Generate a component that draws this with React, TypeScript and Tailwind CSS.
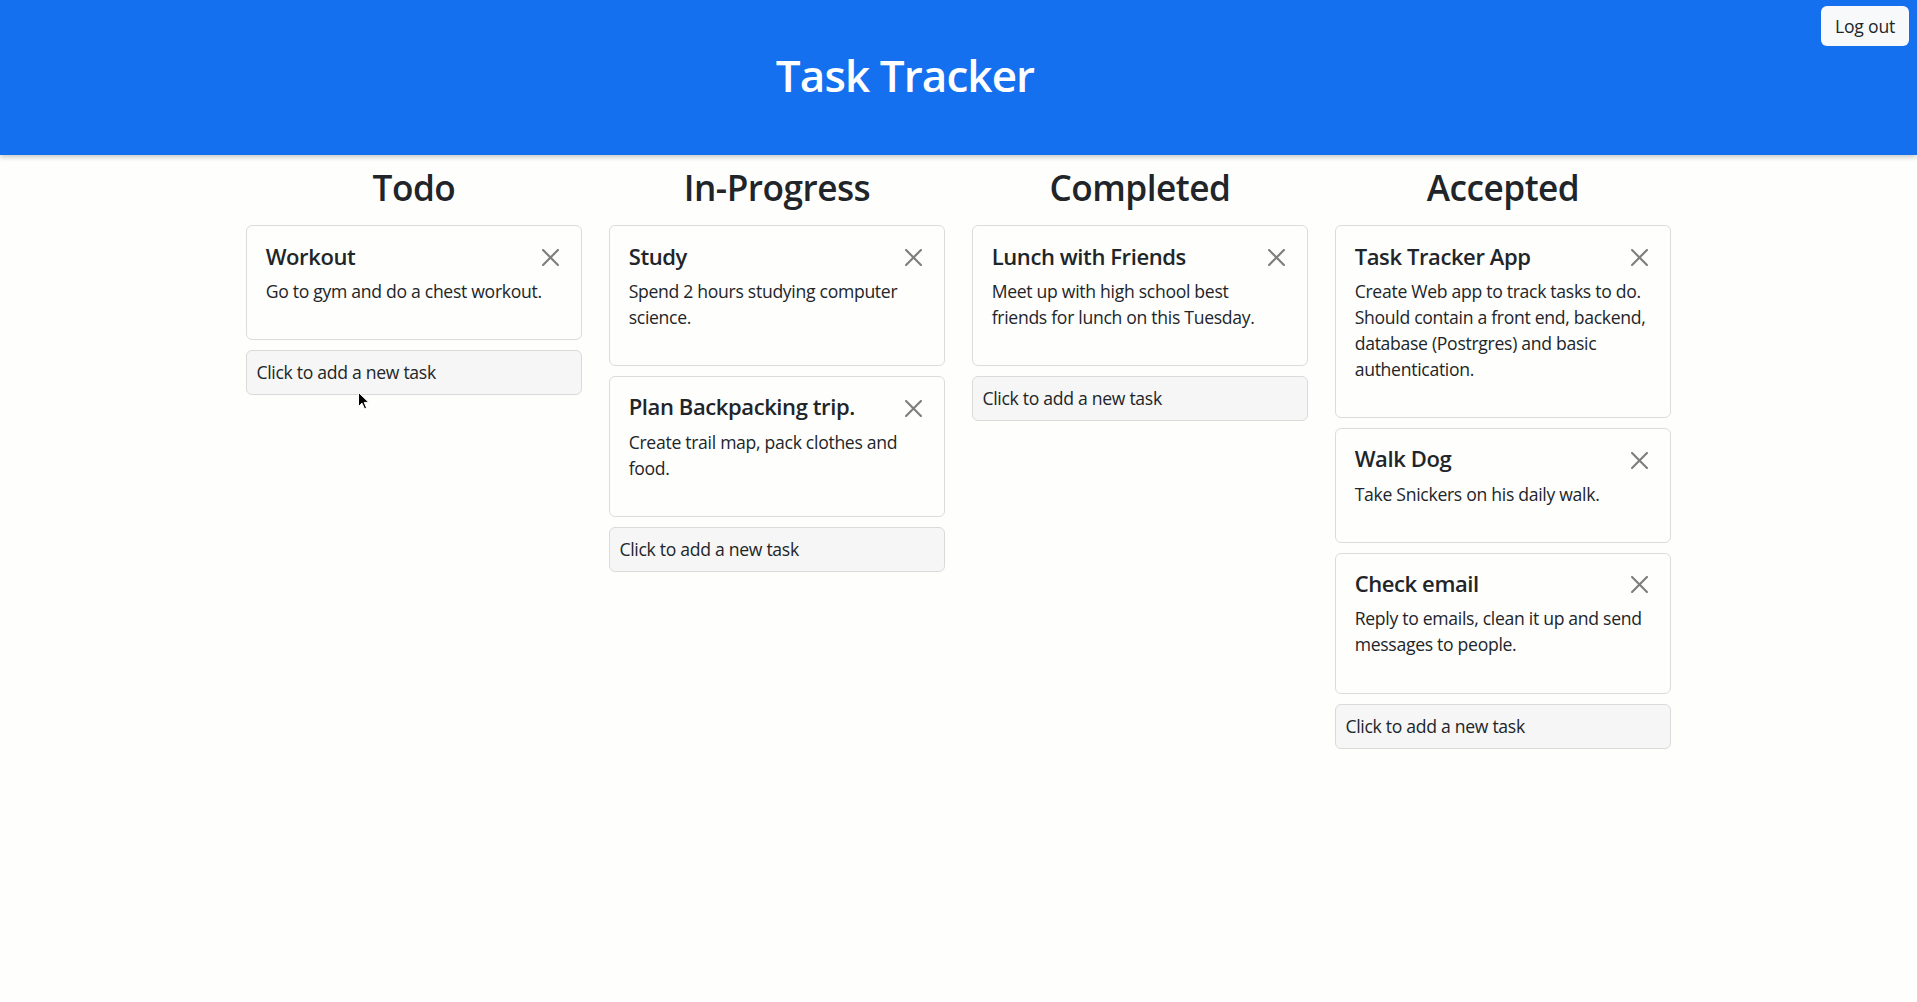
type Task = { title: string; body: string }

type Column = { name: string; tasks: Task[] }

const columns: Column[] = [
  {
    name: 'Todo',
    tasks: [{ title: 'Workout', body: 'Go to gym and do a chest workout.' }],
  },
  {
    name: 'In-Progress',
    tasks: [
      { title: 'Study', body: 'Spend 2 hours studying computer science.' },
      { title: 'Plan Backpacking trip.', body: 'Create trail map, pack clothes and food.' },
    ],
  },
  {
    name: 'Completed',
    tasks: [
      {
        title: 'Lunch with Friends',
        body: 'Meet up with high school best friends for lunch on this Tuesday.',
      },
    ],
  },
  {
    name: 'Accepted',
    tasks: [
      {
        title: 'Task Tracker App',
        body: 'Create Web app to track tasks to do. Should contain a front end, backend, database (Postrgres) and basic authentication.',
      },
      { title: 'Walk Dog', body: 'Take Snickers on his daily walk.' },
      { title: 'Check email', body: 'Reply to emails, clean it up and send messages to people.' },
    ],
  },
]

function CloseIcon() {
  return (
    <svg viewBox="0 0 16 16" className="h-[17px] w-[17px]" fill="#000" opacity={0.5}>
      <path d="M.293.293a1 1 0 0 1 1.414 0L8 6.586 14.293.293a1 1 0 1 1 1.414 1.414L9.414 8l6.293 6.293a1 1 0 0 1-1.414 1.414L8 9.414l-6.293 6.293a1 1 0 0 1-1.414-1.414L6.586 8 .293 1.707a1 1 0 0 1 0-1.414z" />
    </svg>
  )
}

function TaskCard({ task }: { task: Task }) {
  return (
    <div className="mb-[10px] rounded-[6px] border border-[#dcdcdb] bg-[#fefefc] px-[19px] pb-[17.6px] pt-[16.5px]">
      <div className="flex items-center justify-between">
        <h5 className="text-[22px] font-semibold leading-[26.4px] tracking-[-0.4px]">{task.title}</h5>
        <button type="button" className="mr-[3px] mt-[3px] flex items-center justify-center" aria-label="Delete">
          <CloseIcon />
        </button>
      </div>
      {/* narrower wrap box so the lines break where the reference breaks them */}
      <p className="mb-[17.6px] mt-[8.8px] pr-[3px] text-[17.6px] leading-[26px] tracking-[-0.3px]">{task.body}</p>
    </div>
  )
}

function TaskColumn({ column }: { column: Column }) {
  return (
    <div>
      <h2 className="mb-[17px] text-center text-[35.2px] font-semibold leading-[42px] tracking-[-0.5px]">
        {column.name}
      </h2>
      {column.tasks.map((task) => (
        <TaskCard key={task.title} task={task} />
      ))}
      <div className="flex h-[45px] items-center rounded-[6px] border border-[#d9dad9] bg-[#f5f6f5] px-[9.7px] text-[17.6px] leading-[26px] tracking-[-0.3px]">
        Click to add a new task
      </div>
    </div>
  )
}

export default function App() {
  return (
    <div className="relative min-h-screen bg-[#fefefc] font-['Open_Sans',sans-serif] text-[#212529]">
      <header className="relative z-10 flex h-[155px] bg-[#1470ee] shadow-[0_2px_5px_rgba(0,0,0,0.22)]">
        <div className="flex flex-1 items-center justify-center pb-[5px]">
          <h1 className="text-[44px] font-semibold leading-none tracking-[-0.9px] text-white">Task Tracker</h1>
        </div>
        <div className="flex w-[107px] items-start justify-end pr-[8px] pt-[6px]">
          <button
            type="button"
            className="h-[40px] w-[88px] rounded-[6px] bg-[#f8f9fa] text-[17.6px] leading-[26px] tracking-[-0.2px] text-[#212529]"
          >
            Log out
          </button>
        </div>
      </header>

      <main className="mx-auto w-[1452px] px-[13.2px] pt-[11px]">
        <div className="grid grid-cols-4 gap-x-[26.4px]">
          {columns.map((column) => (
            <TaskColumn key={column.name} column={column} />
          ))}
        </div>
      </main>

      {/* mouse pointer captured in the screenshot */}
      <svg className="pointer-events-none absolute left-[358px] top-[392px] h-[18px] w-[12px]" viewBox="0 0 12 18">
        <path d="M0.5 0.5 L0.5 14.5 L4 11.2 L6.5 16.8 L8.6 15.9 L6.2 10.4 L10.8 10.4 Z" fill="#000" stroke="#fff" strokeWidth="1" />
      </svg>
    </div>
  )
}
